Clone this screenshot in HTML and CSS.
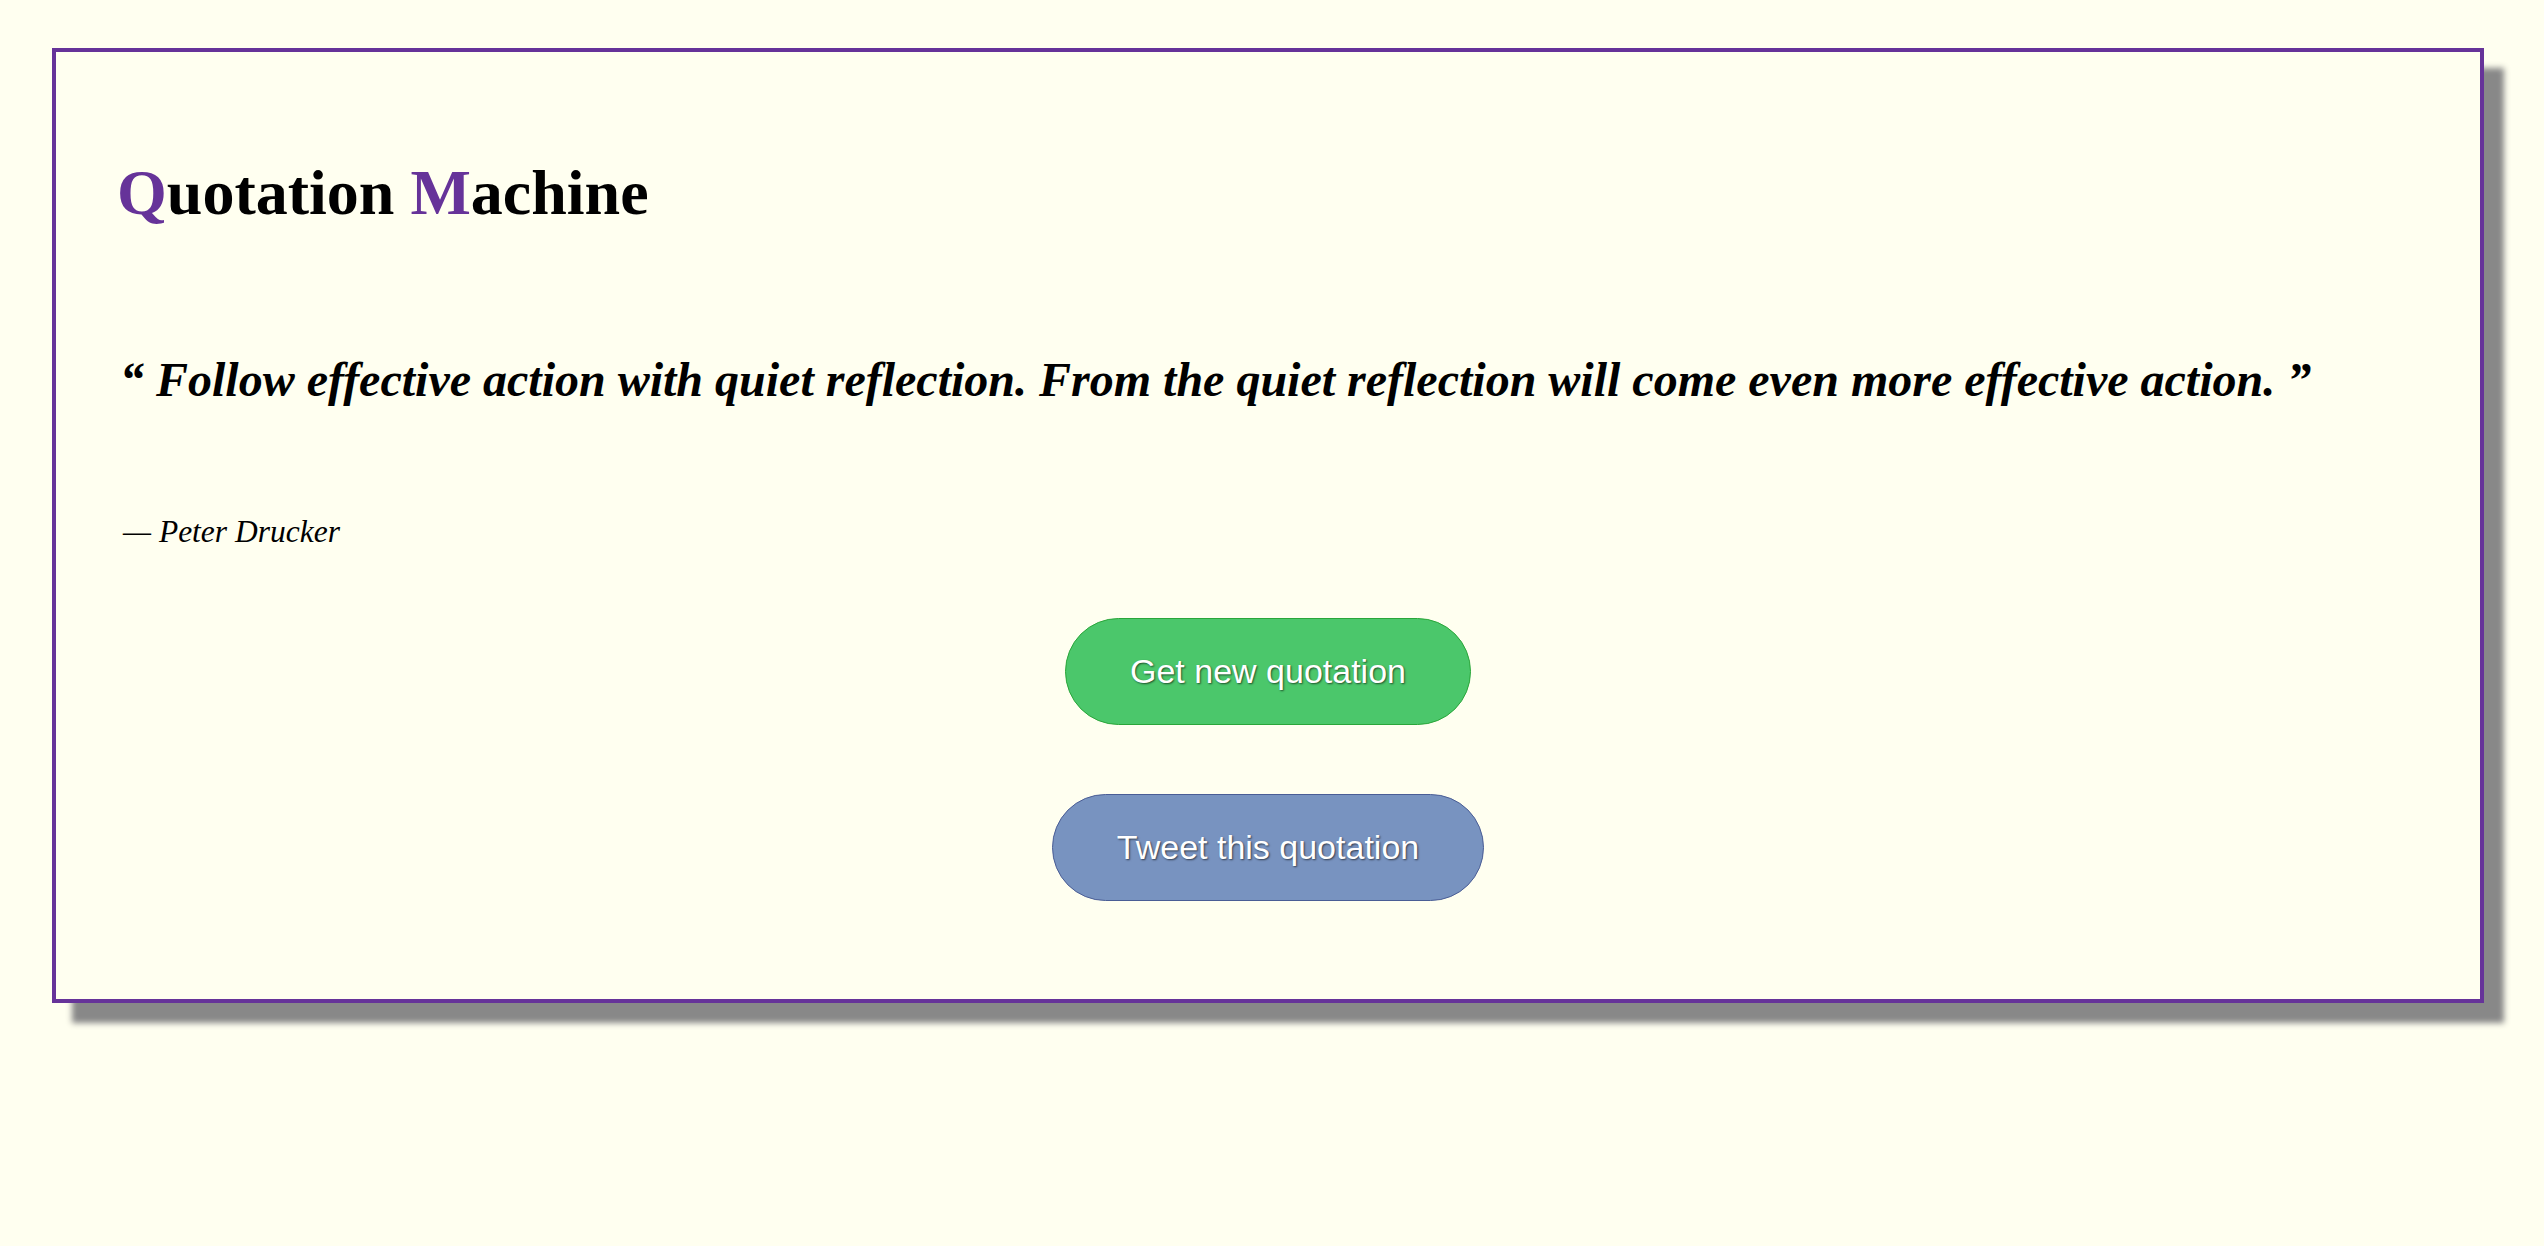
FILE: index.html
```html
<!DOCTYPE html>
<html>
<head>
<meta charset="utf-8">
<link rel="stylesheet" href="styles.css">
</head>
<body>
<div class="card">
  <h1 class="title"><span class="accent">Q</span>uotation <span class="accent">M</span>achine</h1>
  <p class="quote">“ Follow effective action with quiet reflection. From the quiet reflection will come even more effective action. ”</p>
  <p class="author">— Peter Drucker</p>
  <div class="actions">
    <button class="btn btn-new">Get new quotation</button>
    <button class="btn btn-tweet">Tweet this quotation</button>
  </div>
</div>
</body>
</html>
```
FILE: styles.css
```css
html {
  margin: 0;
  padding: 0;
  background: #fffff0;
}
body {
  margin: 0;
  font-family: "Liberation Serif", "Times New Roman", serif;
  padding: 48px 60px 120px 52px;
  min-height: 100vh;
  box-sizing: border-box;
}
.card {
  border: 4px solid #663399;
  background: #fffff0;
  box-shadow: 20px 20px 6px #888888;
  padding: 109px 40px 95px 40px;
  height: 955px;
  box-sizing: border-box;
}
.title {
  margin: 0 0 0 21px;
  font-size: 64px;
  line-height: 1;
  font-weight: bold;
  color: #000;
}
.accent { color: #663399; }
.quote {
  margin: 131px 0 0 24px;
  font-size: 48px;
  line-height: 1;
  font-weight: bold;
  font-style: italic;
}
.author {
  margin: 112px 0 0 27px;
  font-size: 31.5px;
  line-height: 1;
  font-style: italic;
}
.actions {
  display: flex;
  flex-direction: column;
  align-items: center;
  gap: 69px;
  margin-top: 70px;
}
.btn {
  font-family: "Liberation Sans", Arial, sans-serif;
  font-size: 34px;
  line-height: 40px;
  color: #fff;
  text-shadow: 1px 1px 2px rgba(0,0,0,0.6);
  border-radius: 60px;
  padding: 32px 64px;
  box-sizing: border-box;
  height: 107px;
}
.btn-new {
  background: #4bc76b;
  border: 1px solid #2aa63a;
}
.btn-tweet {
  background: #7893c0;
  border: 1px solid #4a5d95;
}
```
